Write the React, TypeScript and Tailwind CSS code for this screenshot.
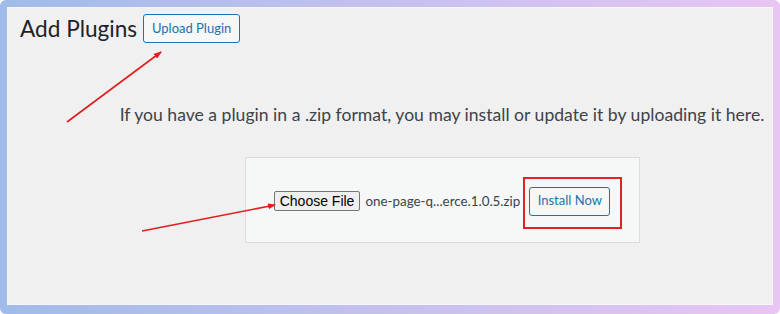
export default function App() {
    return (
        <div className="relative w-[780px] h-[314px] rounded-[6px] bg-gradient-to-r from-[#a0bbe9] to-[#e8c5f3] pl-[7px] pr-[7px] pt-[7px] pb-[9px]">
            <div className="h-full bg-[#f0f0f1] border border-white/40 font-['Lato',sans-serif] text-[#1d2327]">
                <div className="flex items-center gap-[6px] pl-[12px] pt-[6px]">
                    <h1 className="text-[22.6px] leading-[29px] font-normal">Add Plugins</h1>
                    <button className="h-[29px] w-[97px] rounded-[3px] border border-[#2271b1] bg-[#f6f7f7] text-[13px] text-[#2271b1]">
                        Upload Plugin
                    </button>
                </div>
                <div className="flex flex-col items-center pl-[104px] pt-[60px]">
                    <p className="text-[17.6px] leading-[24px] text-[#3c434a] whitespace-nowrap">
                        If you have a plugin in a .zip format, you may install or update it by uploading it here.
                    </p>
                    <div className="mt-[30px] flex h-[86px] w-[395px] items-center justify-center border border-[#dcdcde] bg-[#f6f7f7]">
                        <div className="flex items-center pt-[2px]">
                            <button className="h-[20px] rounded-[2px] border border-[#767676] bg-[#efefef] px-[5px] font-['Liberation_Sans',Arial,sans-serif] text-[14px] leading-none text-black">
                                Choose File
                            </button>
                            <span className="ml-[5px] text-[13.4px] text-[#3c434a]">one-page-q...erce.1.0.5.zip</span>
                            <div className="relative ml-[9px]">
                                <button className="h-[29px] w-[81px] rounded-[3px] border border-[#2271b1] bg-[#f6f7f7] text-[13px] text-[#2271b1]">
                                    Install Now
                                </button>
                                <div className="absolute -left-[6px] -top-[10px] -right-[12px] -bottom-[13px] border-2 border-[#e02424]" />
                            </div>
                        </div>
                    </div>
                </div>
            </div>
            <svg className="absolute left-0 top-0 pointer-events-none" width="780" height="314">
                <defs>
                    <marker id="ah" markerWidth="8" markerHeight="6" refX="7" refY="3" orient="auto" markerUnits="userSpaceOnUse">
                        <path d="M0,0 L8,3 L0,6 Z" fill="#e11d1d" />
                    </marker>
                </defs>
                <line x1="67" y1="122" x2="161" y2="52" stroke="#e11d1d" strokeWidth="1.6" markerEnd="url(#ah)" />
                <line x1="142" y1="231" x2="275" y2="205" stroke="#e11d1d" strokeWidth="1.6" markerEnd="url(#ah)" />
            </svg>
        </div>
    );
}
